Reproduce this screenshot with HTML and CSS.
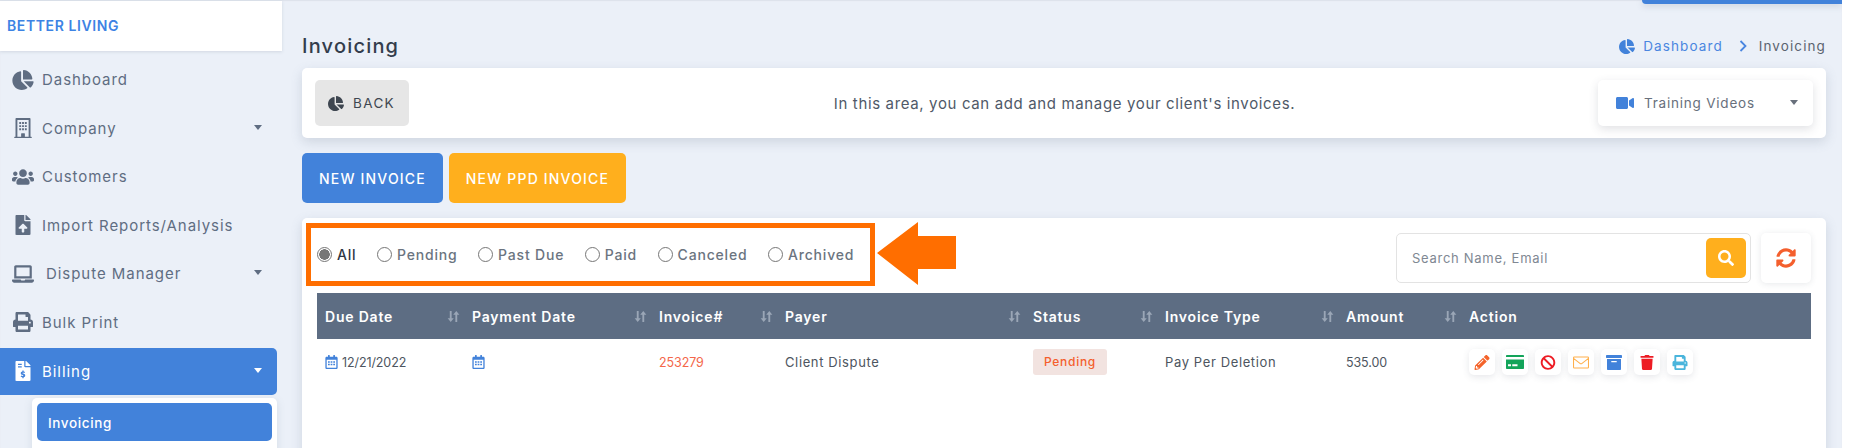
FILE: index.html
```html
<!DOCTYPE html>
<html lang="en">
<head>
<meta charset="utf-8">
<title>Invoicing</title>
<link rel="stylesheet" href="styles.css">
</head>
<body>
<svg class="defs" aria-hidden="true">
  <symbol id="i-pie" viewBox="0 0 544 512"><path d="M527.79 288H290.5l158.03 158.03c6.04 6.04 15.98 6.53 22.19.68 38.7-36.46 65.32-85.61 73.13-140.86 1.34-9.46-6.51-17.85-16.06-17.85zm-15.83-64.8C503.72 103.74 408.26 8.28 288.8.04 279.68-.59 272 7.1 272 16.24V240h223.77c9.14 0 16.82-7.68 16.19-16.8zM224 288V50.71c0-9.55-8.39-17.4-17.84-16.06C86.99 51.49-4.1 155.6.14 280.37 4.5 408.51 114.83 513.59 243.03 511.98c50.4-.63 96.97-16.87 135.26-44.03 7.9-5.6 8.42-17.23 1.57-24.08L224 288z"/></symbol>
  <symbol id="i-building" viewBox="0 0 448 512"><path fill-rule="evenodd" d="M436 480h-20V24c0-13-11-24-24-24H56C43 0 32 11 32 24v456H12c-7 0-12 5-12 12v20h448v-20c0-7-5-12-12-12zM80 48h288v432H272v-80c0-7-5-12-12-12h-72c-7 0-12 5-12 12v80H80zm48 56h48v48h-48zm72 0h48v48h-48zm72 0h48v48h-48zm-144 80h48v48h-48zm72 0h48v48h-48zm72 0h48v48h-48zm-144 80h48v48h-48zm72 0h48v48h-48zm72 0h48v48h-48z"/></symbol>
  <symbol id="i-users" viewBox="0 0 640 512"><path d="M96 224c35.3 0 64-28.7 64-64s-28.7-64-64-64-64 28.7-64 64 28.7 64 64 64zm448 0c35.3 0 64-28.7 64-64s-28.7-64-64-64-64 28.7-64 64 28.7 64 64 64zm32 32h-64c-17.6 0-33.5 7.1-45.1 18.6 40.3 22.1 68.9 62 75.1 109.4h66c17.7 0 32-14.3 32-32v-32c0-35.3-28.7-64-64-64zm-256 0c61.9 0 112-50.1 112-112S381.9 32 320 32 208 82.1 208 144s50.1 112 112 112zm76.8 32h-8.3c-20.8 10-43.9 16-68.5 16s-47.6-6-68.5-16h-8.3C179.6 288 128 339.6 128 403.2V432c0 26.5 21.5 48 48 48h288c26.5 0 48-21.5 48-48v-28.8c0-63.6-51.6-115.2-115.2-115.2zm-223.7-13.4C161.5 263.1 145.6 256 128 256H64c-35.3 0-64 28.7-64 64v32c0 17.7 14.3 32 32 32h65.9c6.3-47.4 34.9-87.3 75.2-109.4z"/></symbol>
  <symbol id="i-upload" viewBox="0 0 384 512"><path fill-rule="evenodd" d="M224 136V0H24C10.700 0 0 10.700 0 24v464c0 13.300 10.700 24 24 24h336c13.300 0 24-10.700 24-24V160H248c-13.200 0-24-10.800-24-24zm65.200 214H224v80c0 8.800-7.200 16-16 16h-32c-8.800 0-16-7.200-16-16v-80H94.800c-14.300 0-21.400-17.300-11.300-27.400l96.400-95.700c6.700-6.600 17.400-6.600 24 0l96.400 95.700c10.200 10.100 3 27.400-11.100 27.400zM377 105L279.100 7c-4.500-4.500-10.600-7-17-7H256v128h128v-6.100c0-6.300-2.500-12.400-7-16.900z"/></symbol>
  <symbol id="i-laptop" viewBox="0 0 640 512"><path fill-rule="evenodd" d="M624 416H381.540c-.74 19.810-14.710 32-32.740 32H288c-18.690 0-33.020-17.470-32.770-32H16c-8.800 0-16 7.200-16 16v16c0 35.200 28.800 64 64 64h512c35.200 0 64-28.800 64-64v-16c0-8.800-7.200-16-16-16zM576 48c0-26.400-21.600-48-48-48H112C85.600 0 64 21.600 64 48v336h512V48zm-64 272H128V64h384v256z"/></symbol>
  <symbol id="i-print" viewBox="0 0 512 512"><path d="M448 192V77.250c0-8.490-3.370-16.620-9.370-22.630L393.370 9.370c-6-6-14.140-9.370-22.630-9.370H96C78.330 0 64 14.330 64 32v160c-35.350 0-64 28.650-64 64v112c0 8.840 7.160 16 16 16h48v96c0 17.670 14.330 32 32 32h320c17.670 0 32-14.330 32-32v-96h48c8.840 0 16-7.160 16-16V256c0-35.350-28.650-64-64-64zm-64 256H128v-96h256v96zm0-224H128V64h192v48c0 8.840 7.160 16 16 16h48v96zm48 72c-13.250 0-24-10.750-24-24 0-13.260 10.750-24 24-24s24 10.740 24 24c0 13.250-10.750 24-24 24z"/></symbol>
  <symbol id="i-bill" viewBox="0 0 384 512"><path fill-rule="evenodd" d="M377 105L279.100 7c-4.500-4.500-10.600-7-17-7H256v128h128v-6.100c0-6.300-2.500-12.400-7-16.900zM224 136V0H24C10.700 0 0 10.700 0 24v464c0 13.300 10.700 24 24 24h336c13.300 0 24-10.700 24-24V160H248c-13.200 0-24-10.800-24-24zM64 72h96v32H64zm0 64h96v32H64zm144 280v24h-32v-24c-18 -1-34-8-46-18l20-24c10 8 21 12 34 12 11 0 20-4 20-12 0-20-70-14-70-62 0-24 18-40 42-44v-24h32v24c15 2 28 8 38 16l-19 25c-9-7-19-11-30-11-11 0-18 4-18 11 0 20 70 12 70 61 0 26-18 42-41 45z"/></symbol>
  <symbol id="i-video" viewBox="0 0 576 512"><path d="M336.200 64H47.800C21.400 64 0 85.400 0 111.800v288.400C0 426.600 21.400 448 47.800 448h288.400c26.400 0 47.800-21.400 47.800-47.800V111.800c0-26.400-21.400-47.800-47.800-47.800zm189.400 37.700L416 177.300v157.400l109.600 75.500c21.200 14.600 50.400-.3 50.400-25.800V127.500c0-25.400-29.100-40.400-50.400-25.800z"/></symbol>
  <symbol id="i-search" viewBox="0 0 512 512"><path d="M505 442.700L405.300 343c-4.500-4.500-10.600-7-17-7H372c27.600-35.300 44-79.700 44-128C416 93.100 322.900 0 208 0S0 93.100 0 208s93.100 208 208 208c48.300 0 92.700-16.400 128-44v16.300c0 6.400 2.500 12.500 7 17l99.700 99.700c9.400 9.400 24.600 9.400 33.900 0l28.300-28.300c9.400-9.400 9.400-24.600.1-34zM208 336c-70.700 0-128-57.200-128-128 0-70.700 57.200-128 128-128 70.700 0 128 57.200 128 128 0 70.700-57.200 128-128 128z"/></symbol>
  <symbol id="i-sync" viewBox="0 0 512 512"><path d="M370.720 133.280C339.458 104.008 298.888 87.962 255.848 88c-77.458.068-144.328 53.178-162.791 126.850-1.344 5.363-6.122 9.150-11.651 9.150H24.103c-7.498 0-13.194-6.807-11.807-14.176C33.933 94.924 134.813 8 256 8c66.448 0 126.791 26.136 171.315 68.685L463.030 40.970C478.149 25.851 504 36.559 504 57.941V192c0 13.255-10.745 24-24 24H345.941c-21.382 0-32.090-25.851-16.971-40.971l41.750-41.749zM32 296h134.059c21.382 0 32.090 25.851 16.971 40.971l-41.750 41.750c31.262 29.273 71.835 45.319 114.876 45.280 77.418-.07 144.315-53.144 162.787-126.849 1.344-5.363 6.122-9.150 11.651-9.150h57.304c7.498 0 13.194 6.807 11.807 14.176C478.067 417.076 377.187 504 256 504c-66.448 0-126.791-26.136-171.315-68.685L48.970 471.030C33.851 486.149 8 475.441 8 454.059V320c0-13.255 10.745-24 24-24z"/></symbol>
  <symbol id="i-sort" viewBox="0 0 14 14"><path d="M3 1h2v8h2.300L4 13 .7 9H3zM9 13h2V5h2.300L10 1 6.700 5H9z"/></symbol>
  <symbol id="i-cal" viewBox="0 0 448 512"><path fill-rule="evenodd" d="M400 64h-48V16c0-9-7-16-16-16h-32c-9 0-16 7-16 16v48H160V16c0-9-7-16-16-16h-32c-9 0-16 7-16 16v48H48C21 64 0 85 0 112v352c0 27 21 48 48 48h352c27 0 48-21 48-48V112c0-27-21-48-48-48zm0 400H48V176h352zM96 224h64v56H96zm96 0h64v56h-64zm96 0h64v56h-64zM96 320h64v56H96zm96 0h64v56h-64zm96 0h64v56h-64z"/></symbol>
  <symbol id="i-pencil" viewBox="0 0 512 512"><path d="M497.900 142.100l-46.100 46.100c-4.700 4.700-12.300 4.700-17 0l-111-111c-4.700-4.700-4.700-12.300 0-17l46.100-46.100c18.700-18.700 49.100-18.700 67.900 0l60.100 60.100c18.800 18.700 18.800 49.100 0 67.900zM284.200 99.800L21.600 362.400.4 483.900c-2.900 16.400 11.400 30.600 27.800 27.800l121.500-21.300 262.600-262.600c4.700-4.700 4.700-12.300 0-17l-111-111c-4.800-4.700-12.400-4.700-17.100 0zM124.100 339.900c-5.500-5.500-5.500-14.300 0-19.800l154-154c5.500-5.500 14.300-5.500 19.800 0s5.500 14.300 0 19.800l-154 154c-5.500 5.500-14.300 5.500-19.800 0zM88 424h48v36.300l-64.500 11.300-31.100-31.100L51.700 376H88v48z"/></symbol>
  <symbol id="i-card" viewBox="0 0 576 448"><path fill-rule="evenodd" d="M0 32C0 14 14 0 32 0h512c18 0 32 14 32 32v32H0zM0 144h576v272c0 18-14 32-32 32H32c-18 0-32-14-32-32zm64 152v64h96v-64zm136 0v64h168v-64z"/></symbol>
  <symbol id="i-ban" viewBox="0 0 512 512"><path d="M256 8C119.034 8 8 119.033 8 256s111.034 248 248 248 248-111.034 248-248S392.967 8 256 8zm130.108 117.892c65.448 65.448 70 165.481 20.677 235.637L150.470 105.216c70.204-49.356 170.226-44.735 235.638 20.676zM125.892 386.108c-65.448-65.448-70-165.481-20.677-235.637L361.530 406.784c-70.203 49.356-170.226 44.736-235.638-20.676z"/></symbol>
  <symbol id="i-mail" viewBox="0 0 512 384"><path fill="none" stroke="currentColor" stroke-width="34" stroke-linejoin="round" d="M40 17h432c13 0 23 10 23 23v304c0 13-10 23-23 23H40c-13 0-23-10-23-23V40c0-13 10-23 23-23zM17 60l205 160c20 15 48 15 68 0L495 60"/></symbol>
  <symbol id="i-archive" viewBox="0 0 512 480"><path fill-rule="evenodd" d="M32 0h448c18 0 32 14 32 32v48c0 9-7 16-16 16H16C7 96 0 89 0 80V32C0 14 14 0 32 0zM32 128h448v320c0 18-14 32-32 32H64c-18 0-32-14-32-32zm148 64c-7 0-12 5-12 12v16c0 7 5 12 12 12h152c7 0 12-5 12-12v-16c0-7-5-12-12-12z"/></symbol>
  <symbol id="i-trash" viewBox="0 0 448 512"><path d="M432 32H312l-9.400-18.700A24 24 0 0 0 281.100 0H166.800a23.720 23.720 0 0 0-21.400 13.300L136 32H16A16 16 0 0 0 0 48v32a16 16 0 0 0 16 16h416a16 16 0 0 0 16-16V48a16 16 0 0 0-16-16zM53.200 467a48 48 0 0 0 47.900 45h245.800a48 48 0 0 0 47.900-45L416 128H32z"/></symbol>
</svg>

<div class="app">
  <aside class="sidebar">
    <div class="logo">BETTER LIVING</div>
    <nav class="nav">
      <a class="nav-item"><svg class="nav-icon"><use href="#i-pie"/></svg><span>Dashboard</span></a>
      <a class="nav-item"><svg class="nav-icon"><use href="#i-building"/></svg><span>Company</span><i class="caret"></i></a>
      <a class="nav-item"><svg class="nav-icon"><use href="#i-users"/></svg><span>Customers</span></a>
      <a class="nav-item"><svg class="nav-icon"><use href="#i-upload"/></svg><span>Import Reports/Analysis</span></a>
      <a class="nav-item nav-item-wide"><svg class="nav-icon"><use href="#i-laptop"/></svg><span>Dispute Manager</span><i class="caret"></i></a>
      <a class="nav-item"><svg class="nav-icon"><use href="#i-print"/></svg><span>Bulk Print</span></a>
      <a class="nav-item active"><svg class="nav-icon"><use href="#i-bill"/></svg><span>Billing</span><i class="caret"></i></a>
    </nav>
    <div class="submenu"><a class="sub-item">Invoicing</a></div>
  </aside>

  <main class="main">
    <div class="top-tab"></div>
    <header class="page-head">
      <h1 class="title">Invoicing</h1>
      <div class="crumbs">
        <svg class="crumb-icon"><use href="#i-pie"/></svg>
        <a class="crumb-link">Dashboard</a>
        <svg class="chev" viewBox="0 0 8 12"><path d="M1.500 1l5 5-5 5" fill="none" stroke="currentColor" stroke-width="1.800"/></svg>
        <span class="crumb-now">Invoicing</span>
      </div>
    </header>

    <section class="intro card">
      <button class="back"><svg class="back-icon"><use href="#i-pie"/></svg>BACK</button>
      <p class="intro-text">In this area, you can add and manage your client's invoices.</p>
      <div class="videos">
        <svg class="video-icon"><use href="#i-video"/></svg>
        <span class="videos-label">Training Videos</span>
        <i class="caret caret-grey"></i>
      </div>
    </section>

    <div class="actions">
      <button class="cta cta-blue">NEW INVOICE</button>
      <button class="cta cta-yellow">NEW PPD INVOICE</button>
    </div>

    <section class="list card">
      <div class="toolbar">
        <div class="filters">
          <label class="radio on"><i class="dot"></i>All</label>
          <label class="radio"><i class="dot"></i>Pending</label>
          <label class="radio"><i class="dot"></i>Past Due</label>
          <label class="radio"><i class="dot"></i>Paid</label>
          <label class="radio"><i class="dot"></i>Canceled</label>
          <label class="radio"><i class="dot"></i>Archived</label>
        </div>
        <svg class="arrow" viewBox="0 0 79 63"><path d="M0 31L41 0v14h38v33H41v16z"/></svg>
        <div class="search">
          <span class="search-ph">Search Name, Email</span>
          <span class="search-btn"><svg class="search-icon"><use href="#i-search"/></svg></span>
        </div>
        <span class="refresh"><svg class="refresh-icon"><use href="#i-sync"/></svg></span>
      </div>

      <table class="table">
        <thead>
          <tr>
            <th class="c1"><div class="th">Due Date<svg class="sort"><use href="#i-sort"/></svg></div></th>
            <th class="c2"><div class="th">Payment Date<svg class="sort"><use href="#i-sort"/></svg></div></th>
            <th class="c3"><div class="th">Invoice#<svg class="sort"><use href="#i-sort"/></svg></div></th>
            <th class="c4"><div class="th">Payer<svg class="sort"><use href="#i-sort"/></svg></div></th>
            <th class="c5"><div class="th">Status<svg class="sort"><use href="#i-sort"/></svg></div></th>
            <th class="c6"><div class="th">Invoice Type<svg class="sort"><use href="#i-sort"/></svg></div></th>
            <th class="c7"><div class="th">Amount<svg class="sort"><use href="#i-sort"/></svg></div></th>
            <th class="c8"><div class="th">Action</div></th>
          </tr>
        </thead>
        <tbody>
          <tr>
            <td class="num"><svg class="cal"><use href="#i-cal"/></svg>12/21/2022</td>
            <td><svg class="cal"><use href="#i-cal"/></svg></td>
            <td class="num inv">253279</td>
            <td>Client Dispute</td>
            <td><span class="badge">Pending</span></td>
            <td>Pay Per Deletion</td>
            <td class="num">535.00</td>
            <td>
              <div class="tools">
                <span class="tool t-orange"><svg><use href="#i-pencil"/></svg></span>
                <span class="tool t-green"><svg><use href="#i-card"/></svg></span>
                <span class="tool t-red"><svg><use href="#i-ban"/></svg></span>
                <span class="tool t-amber"><svg><use href="#i-mail"/></svg></span>
                <span class="tool t-blue"><svg><use href="#i-archive"/></svg></span>
                <span class="tool t-red"><svg><use href="#i-trash"/></svg></span>
                <span class="tool t-sky"><svg><use href="#i-print"/></svg></span>
              </div>
            </td>
          </tr>
        </tbody>
      </table>
    </section>
  </main>
</div>
</body>
</html>
```
FILE: styles.css
```css
* { box-sizing: border-box; }
html, body { margin: 0; height: 448px; overflow: hidden; background: #fff; }
body { font-family: Inter, "Noto Sans", sans-serif; color: #5c6b82; }
.defs { display: none; }
svg { fill: currentColor; display: block; flex: none; }
button { font: inherit; border: 0; padding: 0; }

.app { width: 1842px; height: 448px; display: flex; background: #ebf0f8; overflow: hidden; box-shadow: inset 0 1px 1px #dde2ea; }

/* Sidebar */
.sidebar { width: 282px; flex: none; padding-top: 1px; }
.logo { height: 50px; background: #fff; box-shadow: 0 1px 3px rgba(90,105,130,.18); padding-left: 7px; font-size: 14px; line-height: 50px; font-weight: 600; letter-spacing: .6px; color: #3d83e4; }
.nav { margin-top: 5.500px; }
.nav-item { width: 277px; height: 47px; margin-bottom: 1.600px; display: flex; align-items: center; padding: 0 0 1px 12px; font-size: 15px; letter-spacing: .95px; color: #5f6d82; border-radius: 0 5px 5px 0; }
.nav-item span { margin-left: 30px; }
.nav-icon { width: 22px; height: 20px; margin-right: -22px; }
.nav-item-wide span { margin-left: 34px; }
.caret { margin-left: auto; margin-right: 15px; margin-top: -2px; width: 0; height: 0; border-left: 4.500px solid transparent; border-right: 4.500px solid transparent; border-top: 5px solid #5f6d82; }
.active { background: #4282da; color: #fff; }
.active .caret { border-top-color: #fff; }
.submenu { width: 245px; margin: 3px 0 0 32px; padding: 5px; height: 60px; background: #fff; border-radius: 5px; box-shadow: 0 2px 8px rgba(90,105,130,.15); }
.sub-item { display: block; height: 38px; padding-left: 11px; background: #4282da; border-radius: 5px; color: #fff; font-size: 13.500px; line-height: 40px; letter-spacing: .62px; font-weight: 500; }

/* Main */
.main { flex: 1; min-width: 0; padding: 0 16px 0 20px; position: relative; }
.top-tab { position: absolute; right: 0; top: 0; width: 200px; height: 4px; background: #4282da; border-radius: 0 0 0 5px; box-shadow: 0 2px 6px rgba(90,105,130,.25); }
.page-head { height: 68px; padding: 34px 0 10px 0; display: flex; align-items: center; justify-content: space-between; }
.title { margin: 0; font-size: 20px; line-height: 24px; font-weight: 500; letter-spacing: 1.200px; color: #333d4c; }
.crumbs { display: flex; align-items: center; font-size: 13.500px; letter-spacing: 1.100px; }
.crumb-icon { width: 16px; height: 15px; color: #4282da; margin-right: 8px; }
.crumb-link { color: #4a86e0; }
.chev { width: 8px; height: 12px; color: #4a86e0; margin: 0 12px 0 16px; }
.crumb-now { color: #5b6470; }
.card { background: #fff; border-radius: 5px; box-shadow: 0 4px 12px rgba(90,105,130,.2); }
.intro { height: 70px; padding: 12px 13px; display: flex; align-items: center; }
.back { width: 94px; height: 46px; background: #e6e6e6; border-radius: 5px; display: flex; align-items: center; padding-left: 13px; color: #3e4650; font-size: 13.500px; letter-spacing: 1.350px; }
.back-icon { width: 16px; height: 15px; margin-right: 9px; }
.intro-text { flex: 1; margin: 0; text-align: center; font-size: 15px; letter-spacing: .64px; color: #4f5968; padding-left: 122px; }
.videos { width: 215px; height: 46px; border-radius: 5px; background: #fff; box-shadow: 0 3px 10px rgba(60,70,90,.16); display: flex; align-items: center; padding-left: 18px; }
.video-icon { width: 18px; height: 16px; color: #4282da; margin-right: 10px; }
.videos-label { font-size: 13.500px; letter-spacing: .78px; color: #68707c; }
.caret-grey { border-top-color: #68707c; }

.actions { display: flex; gap: 6px; margin-top: 15px; }
.cta { height: 50px; border-radius: 5px; color: #fff; font-size: 14px; font-weight: 500; letter-spacing: 1.180px; }
.cta-blue { width: 141px; background: #4282da; }
.cta-yellow { width: 177px; background: #ffaf1d; }

.list { margin-top: 15px; height: 260px; padding: 5px 15px 0 15px; position: relative; }
.toolbar { height: 70px; display: flex; align-items: flex-start; }
.filters { margin-left: -11px; width: 569px; flex: none; height: 63px; border: 5px solid #ff6e00; display: flex; align-items: center; padding-left: 6px; font-size: 14px; }
.radio { display: flex; flex: none; white-space: nowrap; align-items: center; color: #6b7480; letter-spacing: .82px; font-weight: 500; margin-right: 20.500px; }
.dot { width: 15px; height: 15px; border: 1px solid #767676; border-radius: 50%; margin-right: 5px; background: #fff; }
.radio.on { color: #2f3743; }
.radio.on .dot { background: radial-gradient(circle, #767676 0 5px, #fff 5.500px); }
.arrow { width: 79px; height: 63px; margin: -1px 0 0 2px; fill: #ff6e00; }
.search { margin: 10px 0 0 auto; width: 355px; height: 50px; border: 1px solid #e3e3e3; border-radius: 5px; display: flex; align-items: center; padding: 0 4px 0 15px; justify-content: space-between; }
.search-ph { font-size: 13px; letter-spacing: .72px; color: #808893; }
.search-btn { width: 40px; height: 40px; border-radius: 5px; background: #ffaf1d; display: flex; align-items: center; justify-content: center; color: #fff; }
.search-icon { width: 16px; height: 16px; }
.refresh { margin: 10px 0 0 10px; width: 50px; height: 50px; border-radius: 5px; background: #fff; box-shadow: 0 1px 6px rgba(60,70,90,.12); display: flex; align-items: center; justify-content: center; color: #f45f2d; }
.refresh-icon { width: 20px; height: 20px; }

.table { width: 1494px; border-collapse: collapse; table-layout: fixed; font-size: 13px; color: #4d5560; }
.c1 { width: 147px; } .c2 { width: 187px; } .c3 { width: 126px; } .c4 { width: 248px; }
.c5 { width: 132px; } .c6 { width: 181px; } .c7 { width: 123px; } .c8 { width: 350px; }
th { height: 46px; background: #5d6d83; color: #fff; font-size: 14px; font-weight: 600; letter-spacing: .8px; text-align: left; padding: 0 0 0 8px; }
.th { display: flex; align-items: center; justify-content: space-between; padding-right: 4px; }
.sort { width: 13px; height: 13px; color: #9aa6b6; }
td { height: 46px; padding: 0 0 0 8px; letter-spacing: .62px; vertical-align: middle; position: relative; }
td.num { font-size: 12.500px; letter-spacing: -.1px; white-space: nowrap; }
.cal { display: inline-block; width: 13px; height: 14px; color: #4282da; vertical-align: -2px; margin-right: 4px; }
.inv { color: #f4674a; }
.badge { display: inline-block; width: 74px; height: 26px; border-radius: 3px; background: #f2e3e0; color: #f45f2d; font-size: 12px; font-weight: 500; letter-spacing: .72px; line-height: 26px; text-align: center; }
.tools { display: flex; gap: 7px; }
.tool { width: 26px; height: 26px; border-radius: 5px; background: #fff; box-shadow: 0 2px 7px rgba(60,70,90,.13); display: flex; align-items: center; justify-content: center; }
.tool svg { width: 16px; height: 15px; }
.tool.t-green svg { width: 18px; height: 14px; }
.t-orange { color: #f4632a; }
.t-green { color: #13a45a; }
.t-red { color: #ed1c24; }
.t-amber { color: #ffb04c; }
.t-blue { color: #4282da; }
.t-sky { color: #4ab5dc; }
```
